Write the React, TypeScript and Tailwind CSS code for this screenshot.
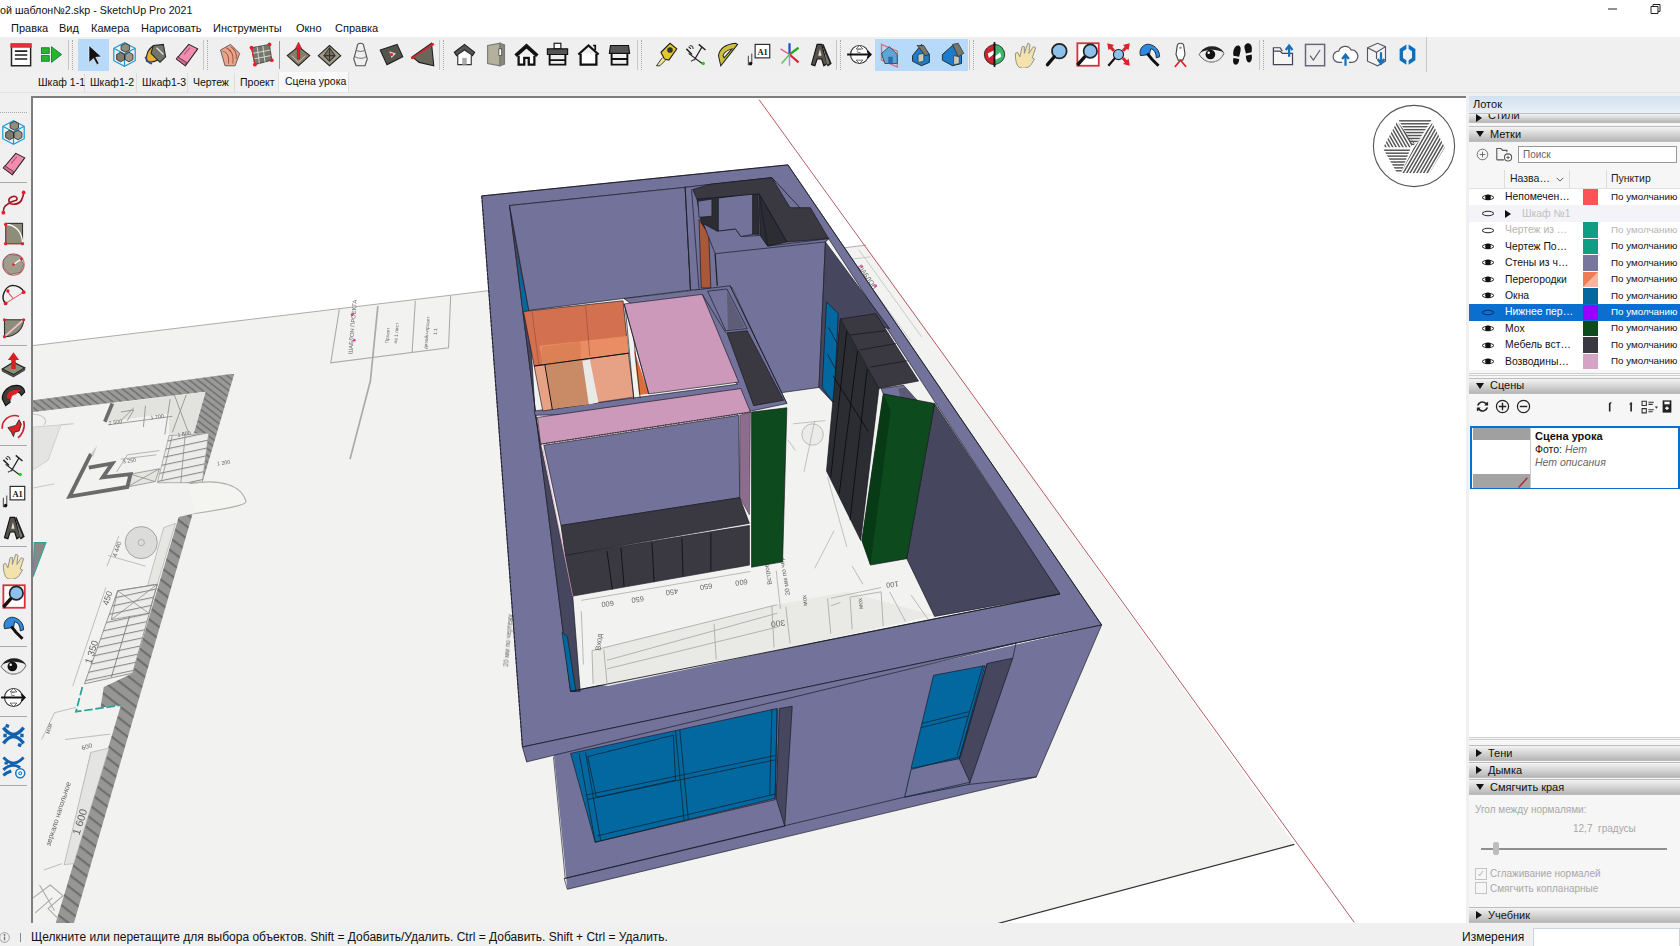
import React from "react";

type PP = { p: string; f?: string; s?: string; w?: number };
const P = ({ p, f = "none", s = "#15151f", w = 0.6 }: PP) => <polygon points={p} fill={f} stroke={s} strokeWidth={w} strokeLinejoin="round" />;
const L = ({ d, s = "#15151f", w = 0.6, dash }: { d: string; s?: string; w?: number; dash?: string }) => <path d={d} fill="none" stroke={s} strokeWidth={w} strokeDasharray={dash} />;
const T = ({ x, y, r, t, z = 6 }: { x: number; y: number; r: number; t: string; z?: number }) => (
  <text x={x} y={y} transform={`rotate(${r} ${x} ${y})`} fontSize={z} fill="#666" fontFamily="'Liberation Sans',sans-serif">{t}</text>
);

const WALL = "#72729a";
const DARK = "#3a3941";
const DARKER = "#2c2c33";
const SHADE = "#46465f";
const PINK = "#cc99bb";
const GREEN = "#0d4a1e";
const BLUE = "#02689f";
const PAPER = "#f2f3f0";

function Scene() {
  return (
    <svg viewBox="29.9 90.5 1338.4 771" preserveAspectRatio="none" className="block w-full h-full">
      <defs>
        <pattern id="hatch" patternUnits="userSpaceOnUse" width="5" height="5" patternTransform="rotate(38)">
          <rect width="5" height="5" fill="#9a9a99" />
          <rect width="5" height="1.500" fill="#727272" />
        </pattern>
        <pattern id="hatchB" patternUnits="userSpaceOnUse" width="9" height="9" patternTransform="rotate(38)">
          <rect width="9" height="9" fill="#969695" />
          <rect width="9" height="2" fill="#6e6e6e" />
        </pattern>
        <pattern id="stairs" patternUnits="userSpaceOnUse" width="7" height="7" patternTransform="rotate(-12)">
          <rect width="7" height="7" fill="#ececea" />
          <rect width="7" height="1" fill="#8a8a8a" />
        </pattern>
        <filter id="soft"><feGaussianBlur stdDeviation="0.5" /></filter>
      </defs>
      <rect x="0" y="0" width="1568" height="883" fill="#ffffff" />
      <polygon points="29,322 808,228 1208,788 931,862 29,862" fill={PAPER} />
      <L d="M29 322L808 228" s="#a9a9a6" w="0.9" />
      <L d="M1208 788L931 862" s="#333" w="1.2" />
      <L d="M708 92L1264 861" s="#b3565f" w="0.9" />

      <g filter="url(#soft)">
        {/* title block on the sheet */}
        <L d="M316 288L308 338L418 324L420 275 M387 280L384 328" s="#aaaaa8" w="1" />
        <L d="M352 285L345 355L326 428" s="#aaaaa8" w="1.6" />
        <circle cx="328" cy="293" r="1.400" fill="#f040a8" />
        <circle cx="330" cy="317" r="1.400" fill="#f040a8" />
        <T x={328} y={330} r={-85} t="ШАБЛОН ПРОЕКТА" z={5.5} />
        <T x={362} y={320} r={-85} t="Проект" z={4.500} />
        <T x={370} y={320} r={-85} t="на 1 лист" z={4.500} />
        <T x={398} y={325} r={-85} t="дизайн-проект" z={4.500} />
        <T x={407} y={312} r={-85} t="1:1" z={4.500} />
        <L d="M790 236L850 318 M801 232L860 314 M795 241L812 239" s="#c8c8c5" w="0.9" />
        <circle cx="804" cy="248" r="1.300" fill="#f040a8" />
        <circle cx="817" cy="266" r="1.300" fill="#f040a8" />
        <T x={800} y={248} r={55} t="ШАБЛОН" z={6} />
        {/* left plan */}
        <polygon points="30,373 218,348 188,450 177,451 194,404 180,404 191,365 30,384" fill="url(#hatch)" />
        <polygon points="166,482 179,479 68,862 51,862 112,658 93,660 96,641 123,628" fill="url(#hatchB)" />
        <polygon points="104,376 191,365 180,404 157,406 157,385 100,393" fill="#e2e2df" />
        <L d="M104 376L97 393" s="#6c6c6c" w="3.4" />
        <L d="M112 384L124 382L118 392 M112 392L124 380 M158 372L153 405 M135 378L133 398 M173 368L160 403 M162 368L175 403 M100 396L160 388" s="#8f8f8d" w="0.8" />
        <polygon points="157,406 194,404 188,450 146,450" fill="url(#stairs)" stroke="#999" strokeWidth="0.7" />
        <polygon points="121,442 148,437 144,449 118,454" fill="#e4e4e1" stroke="#888" strokeWidth="0.7" />
        <L d="M121 442L144 449 M148 437L118 454 M160 406L150 448 M172 405L168 450" s="#888" w="0.7" />
        <L d="M84 423L64 463L118 454L121 442L95 445L104 432L82 436" s="#6a6a6a" w="3.6" />
        <polygon points="84,423 90,415 86,426" fill="#ccc" />
        <L d="M108 440L118 424L148 420 M112 428L145 424" s="#aaa" w="0.8" />
        <T x={114} y={432} r={-8} t="3 250" z={5} />
        <T x={101} y={396} r={-8} t="2 500" z={5} />
        <T x={140} y={391} r={-8} t="1 700" z={5} />
        <T x={165} y={407} r={-8} t="1 800" z={5} />
        <T x={202} y={434} r={-8} t="1 200" z={5} />
        <polygon points="30,398 56,396 44,429 30,438" fill="#e4e4e2" stroke="#ccc" strokeWidth="0.8" />
        <L d="M30 386C40 386 44 392 40 396 M56 396L68 395 M30 455L50 451" s="#c8c8c6" w="1" />
        <polygon points="31,506 42,506 30,538" fill="#888" stroke="#2aa198" strokeWidth="1" />
        <path d="M176 451C205 446 225 452 229 468C228 472 200 476 180 479" fill="#f4f4f1" stroke="#b0b0ad" strokeWidth="1" />
        <polygon points="152,492 163,488 146,545 137,546" fill="#e6e6e3" stroke="#aaa" strokeWidth="0.6" />
        <circle cx="131" cy="506" r="15" fill="#dcdcda" stroke="#999" strokeWidth="0.8" />
        <circle cx="131" cy="506" r="3" fill="none" stroke="#999" strokeWidth="0.6" />
        <polygon points="109,551 146,545 123,628 78,638" fill="url(#stairs)" stroke="#888" strokeWidth="0.8" />
        <L d="M109 551L146 545L138 572L103 578Z M109 551L138 572 M146 545L103 578" s="#888" w="0.7" />
        <L d="M120 575L103 632" s="#777" w="0.8" />
        <L d="M98 548L67 640 M110 500L99 528 M100 518L135 528" s="#aaa" w="0.7" />
        <L d="M76 641L70 664L112 658" s="#2aa198" w="1.6" dash="8 2.5" />
        <L d="M70 660L50 665L38 690 M60 690L102 685 M84 702L60 806 M57 806L40 812" s="#aaa" w="0.7" />
        <polygon points="84,702 101,698 68,806 59,807" fill="#e4e4e2" stroke="#aaa" strokeWidth="0.6" />
        <L d="M30 838L46 826L58 836L44 848L54 858 M32 852L48 838 M36 826L50 850" s="#aaa" w="1" />
        <T x={84} y={620} r={-72} t="1 350" z={9} />
        <T x={100} y={565} r={-72} t="450" z={8} />
        <T x={108} y={520} r={-72} t="4 440" z={6} />
        <T x={73} y={780} r={-72} t="1 600" z={10} />
        <T x={46} y={790} r={-72} t="зеркало напольное" z={7} />
        <T x={45} y={685} r={-72} t="мох" z={6} />
        <T x={76} y={700} r={-15} t="600" z={6} />
        <T x={474} y={622} r={-85} t="20 мм по чертежу" z={6} />
      </g>

      {/* wall top */}
      <P p="449,182 735,153 1028,583 487,697" f={WALL} s="#1c1c2e" w="0.7" />
      {/* front */}
      <polygon points="516,700 1028,583 967,725 529,830" fill={WALL} />
      <polygon points="487,697 1028,583 948,600 490.7,711" fill={WALL} />
      <L d="M490.7 711L948 600 M526 820L843 744 M904 732L967 725 M526 820L529 830 M516 706L527 820 M1028 583L967 725 M529 830L967 725 M487 697L491 711" />
      {/* big window */}
      <P p="532,703 725,661 723,745 555,786" f={BLUE} />
      <P p="727,661 739,659 732,771 724,745" f={SHADE} />
      <L d="M843 744L905 730 M555 786L724 746 M732 771L526 820" />
      <L d="M546 742L723 705 M548 746L723 709 M630 682L638 766 M634 681L642 765 M540 703L555 786 M546 702L560 784 M557 780L723 741 M720 662L718 742 M725 662L723 745 M548 706L628 686L630 728L556 744Z" s="#0b2b3f" w="0.8" />
      {/* small window */}
      <P p="871,630 919,621 895,708 850,717" f={BLUE} />
      <P p="921,619 945,614 905,730 895,708" f={SHADE} />
      <L d="M860 675L904 664 M859 679L903 668 M850 718L896 706 M917 621L893 705 M850 718L844 744L904 732L905 730 M921 619L896 707" s="#0b2b3f" w="0.8" />
      <L d="M948 600L945 614" />

      {/* interior */}
      <P p="475,191 639,174 720,165 773,222 989,554 532,645" f={PAPER} />
      {/* floor drawing */}
      <g filter="url(#soft)">
        <polygon points="553,638 552,607 725,564 790,552 872,574 880,572 733,605 567,640" fill="#e9e9e6" />
        <L d="M553 638L552 607L725 564 M566 637L563 606 M566 624L725 585 M566 616L725 572 M668 615L666 582 M722 604L720 565 M737 600L733 566 M775 591L772 558 M775 565L784 562 M795 587L793 557L822 552L824 584" s="#a9a9a7" w="0.8" />
        <L d="M542 560L700 533 M542 570L544 620 M724 532L728 568 M775 558L822 548 M830 552L845 580 M850 555L866 578 M795 528L805 545" s="#999" w="0.6" />
        <circle cx="758" cy="405" r="10" fill="#ebebe8" stroke="#aaa" strokeWidth="0.7" />
        <L d="M740 395L770 392 M735 410L742 420 M760 392L750 440 M772 445L790 510 M778 495L760 530" s="#a5a5a3" w="0.6" />
        <T x={572} y={560} r={172} t="600" z={7} />
        <T x={600} y={556} r={172} t="650" z={7} />
        <T x={632} y={549} r={172} t="450" z={7} />
        <T x={664} y={544} r={172} t="650" z={7} />
        <T x={697} y={540} r={172} t="600" z={7} />
        <T x={732} y={578} r={172} t="300" z={8} />
        <T x={838} y={542} r={172} t="100" z={7} />
        <T x={560} y={607} r={-85} t="Вход" z={7} />
        <T x={720} y={545} r={-100} t="Встроенный" z={6} />
        <T x={737} y={555} r={-100} t="20 мм по чертежу" z={6} />
        <T x={753} y={565} r={-95} t="мох" z={6} />
        <T x={805} y={568} r={-95} t="мох" z={6} />
      </g>
      {/* left inner wall sliver */}
      <P p="475,191 493,289 499,387 504,414 534,556 541,645 532,645" f={SHADE} />
      <polygon points="482,240 493,289 488,290" fill={BLUE} />
      <polygon points="524,590 529,594 537,645 532,645" fill={BLUE} stroke="#111" strokeWidth="0.5" />
      {/* back left room */}
      <P p="475,191 639,174 644,270 493,289" f={WALL} />
      {/* back block / corridor */}
      <P p="639,174 664,171 720,165 773,222 770,225 764,361 728,366 683,268 644,270" f={WALL} />
      <L d="M639 173L644 270 M645 176L652 270" />
      <P p="650,185 707,180 708,218 670,216 655,212" f={DARKER} />
      <P p="651,187 664,185 664,201 652,202" f={WALL} />
      <P p="670,184 702,180 702,218 691,220 686,213 670,215" f={WALL} />
      <P p="708,180 734,224 716,229 709,219" f={DARKER} />
      <L d="M720 196L720 226" s="#111" />
      <P p="663,171 720,165 737,193 756,193 773,222 734,225 708,180 650,185 646,176" f={DARK} />
      <P p="708,180 734,225 716,229" f={DARKER} />
      <P p="652,204 661,218 663,268 654,268" f="#a9583a" />
      <P p="656,208 669,215 686,213 691,220 709,219 716,229 773,222 770,225 667,236" f={WALL} />
      <L d="M667 236L669 266" s="#222" w="1.2" />
      {/* right upper wall and window */}
      <P p="770,225 830,306 784,297 778,376 764,361" f={SHADE} />
      <P p="771,281 782,292 778,376 767,361" f={BLUE} />
      <L d="M773 305L781 320 M772 330L780 345" s="#111" />
      {/* wardrobe */}
      <P p="784,297 817,292 857,355 820,362" f={DARK} />
      <L d="M793 312L826 308 M802 326L836 320 M812 342L847 336" s="#111" />
      <P p="784,297 820,362 803,504 771,439" f={DARKER} />
      <L d="M790 308L775 445 M800 327L783 460 M809 344L793 485 M777 350L810 402" s="#000" />
      {/* pilaster on wardrobe */}
      <P p="822,362 843,359 858,376 824,367" f={WALL} />
      <polygon points="838,362 845,361 858,375 842,378" fill="#5a5a75" />
      {/* dark right wall */}
      <P p="872,376 989,554 872,575 846,521" f={SHADE} />
      {/* green panel */}
      <P p="824,367 872,376 846,521 812,527 804,504" f={GREEN} />
      <polygon points="824,367 831,383 812,527 804,504" fill="#083a16" />
      {/* partition mass */}
      <P p="582,278 681,266 734,376 701,383 499,387 498,383 688,358" f={WALL} />
      {/* orange room */}
      <P p="488,290 581,280 586,329 498,341" f="#d2704f" />
      <polygon points="503,322 585,313 586,329 506,340" fill="#ea8d65" />
      <polygon points="505,340 505,323 541,318 542,335" fill="#dc8055" />
      <L d="M496 290L503 345 M546 284L550 332" s="#9a4f33" w="0.6" />
      <P p="498,341 586,329 591,370 506,383" f="#e7a285" />
      <polygon points="508,339 548,335 549,377 515,381" fill="#c98a66" />
      <polygon points="543,336 550,335 558,375 549,377" fill="#e9e9e8" />
      <L d="M498 341L586 329 M508 340L515 382" s="#111" w="0.9" />
      <polygon points="591,325 605,367 596,368" fill="#dc6e3e" />
      <L d="M583 285L591 372 M588 287L597 371" s="#111" />
      {/* pink roof */}
      <P p="582,283 655,274 689,356 605,367" f={PINK} />
      <L d="M582 283L605 367" />
      {/* recess + dark strip */}
      <P p="660,271 678,269 697,306 677,308" f={WALL} />
      <polygon points="678,271 695,305 679,307" fill="#5d5d78" />
      <P p="678,310 697,308 731,373 703,378" f={DARK} />
      <L d="M655 274L677 310 M681 266L734 376" />
      {/* pink band */}
      <P p="501,389 691,362 700,384 504,414" f={PINK} />
      <L d="M504 414L700 384" s="#4a2a3a" w="1" dash="1.5 1" />
      {/* room wall */}
      <P p="507,415 689,387 690,464 523,490" f={WALL} />
      <polygon points="690,387 700,384 699,480 690,464" fill="#8d6d8d" stroke="#111" strokeWidth="0.4" />
      {/* bench */}
      <P p="523,490 690,464 699,488 527,518" f={DARK} />
      <P p="527,518 699,490 699,527 534,556" f={DARK} />
      <L d="M566 514L571 550 M579 511L582 547 M608 506L610 543 M636 502L637 538 M663 497L663 533" s="#000" />
      <L d="M506 418L534 556" s="#d99cc0" w="0.7" />
      {/* green panel left */}
      <P p="701,384 734,380 730,524 701,529" f={GREEN} />
      {/* opening edge */}
      <L d="M532 645L989 554" w="0.8" />
      <L d="M449 182L487 697" w="0.7" s="#10101c" dash="3 1" />
      <L d="M449 182L735 153L1028 583L487 697" w="0.7" />
    </svg>
  );
}

function Logo() {
  const sx = (id: string, rot: number, points: string) => (
    <g clipPath={`url(#${id})`}>
      <clipPath id={id}><polygon points={points} /></clipPath>
      <g transform={`rotate(${rot} 60 60)`}>
        {Array.from({ length: 50 }).map((_, i) => (
          <rect key={i} x="-60" y={-40 + i * 4.2} width="240" height="2.1" fill="#555" />
        ))}
      </g>
    </g>
  );
  return (
    <svg viewBox="0 0 120 120" className="absolute top-[6px] right-[10px] w-[84px] h-[84px] bg-white rounded-full">
      <circle cx="60" cy="60" r="58" fill="#fff" stroke="#555" strokeWidth="1.600" />
      {sx("lgA", 0, "38,23 85,23 66,53 58,60 48,40")}
      {sx("lgB", 60, "36,25 16,62 55,62 60,55")}
      {sx("lgC", 0, "16,64 55,64 41,99 36,99")}
      {sx("lgD", -60, "86,27 104,62 82,99 41,99 60,62")}
    </svg>
  );
}

const S = ({ children }: { children: React.ReactNode }) => (
  <svg viewBox="0 0 24 24" className="w-[27px] h-[27px]" fill="none">{children}</svg>
);
const red = "#e0202c";
const ICONS: Record<string, React.ReactNode> = {
  tray: <><rect x="4" y="3" width="17" height="19" fill="#fff" stroke="#222" strokeWidth="1.300" /><rect x="3" y="2" width="19" height="4" fill="#e0303a" /><path d="M7 9h11M7 12.500h11M7 16h11" stroke="#222" strokeWidth="1.400" /></>,
  go: <><rect x="3" y="6" width="7" height="5" fill="#28b52a" stroke="#164" strokeWidth=".7" /><rect x="3" y="13" width="7" height="5" fill="#28b52a" stroke="#164" strokeWidth=".7" /><path d="M12 5l9 7-9 7z" fill="#28b52a" stroke="#164" strokeWidth=".7" /></>,
  select: <path d="M8 4l0 15 4-3.500 3 5.500 2-1-3-5.500 5-.5z" fill="#111" stroke="#fff" strokeWidth=".5" />,
  comp: <><path d="M12 1.500l9.500 5v11l-9.500 5-9.500-5v-11z M2.500 6.500l9.500 5 9.500-5 M12 11.500v11" stroke="#1a9bd8" strokeWidth="1.100" /><path d="M9 4l4-2 3.500 2v4l-3.500 2-4-2z" fill="#8f8d7d" stroke="#222" strokeWidth=".7" /><path d="M5 12l3.500-2 3.500 2v4.500l-3.500 2-3.500-2z" fill="#7f7d70" stroke="#222" strokeWidth=".7" /><path d="M12.500 12l3.500-2 3.500 2v4.500l-3.500 2-3.500-2z" fill="#9a9889" stroke="#222" strokeWidth=".7" /></>,
  paint: <><path d="M4 18C3 12 6 6 11 4l8 8c-3 5-9 8-15 6z" fill="#e8b12f" stroke="#222" /><path d="M10 4l9-1 2 11-5 5-8-8z" fill="#73736a" stroke="#222" strokeWidth=".9" /><path d="M13 6l6 6" stroke="#ddd" strokeWidth="1.200" /><path d="M3 14c1 4 4 6 6 6" stroke="#3a4a9a" strokeWidth="1.600" /></>,
  eraser: <><path d="M3 16L14 3l8 4-11 15z" fill="#f08cb0" stroke="#222" strokeWidth=".9" /><path d="M3 16l8 6 1-3-8-5z" fill="#d66a90" stroke="#222" strokeWidth=".6" /><path d="M10 12l5-6" stroke="#b15477" strokeWidth="1" /></>,
  cont1: <><path d="M4 8L13 3l8 8-4 11-9 0z" fill="#e8a68f" stroke="#555" strokeWidth=".8" /><path d="M6 9c4 1 6 4 5 11M9 6c4 2 7 5 6 14M13 5c3 2 6 5 5 11" stroke="#a5533f" strokeWidth=".9" /></>,
  cont2: <><path d="M4 6L20 3l2 14-15 4z" fill="#77766a" stroke="#333" strokeWidth=".7" /><path d="M9 5l2 15M14 4l2 15M5 11l16-3M6 16l15-3" stroke="#ddd" strokeWidth=".8" /><g fill={red}><circle cx="4" cy="6" r="1.700" /><circle cx="20" cy="3" r="1.700" /><circle cx="22" cy="17" r="1.700" /><circle cx="7" cy="21" r="1.700" /></g><path d="M4 6l3 15" stroke={red} /></>,
  sand1: <><path d="M12 5L22 13 12 22 2 13z" fill="#857f69" stroke="#222" strokeWidth=".9" /><path d="M12 1l3 6h-2v9h-2V7H9z" fill={red} stroke="#611" strokeWidth=".4" /><path d="M6 13l6 6 6-6" stroke="#ccc" strokeWidth=".7" /></>,
  sand2: <><path d="M12 4L22 13 12 22 2 13z" fill="#a19c87" stroke="#222" strokeWidth=".9" /><path d="M12 6l5 7-5 5-5-5z M12 6v12M7 13h10" stroke="#333" strokeWidth=".9" fill="#777161" /></>,
  sand3: <><path d="M12 2a3 3 0 013 3l3 11-2 6H8l-2-6L9 5a3 3 0 013-3z" fill="#f0f0f0" stroke="#555" /><path d="M8 8c3 2 5 2 8 0M7 14c4 2 7 2 10 0" stroke="#888" /></>,
  sand4: <><path d="M2 8L17 3l5 11-14 7z" fill="#55544c" stroke="#222" /><path d="M10 9l6 2-4 4z" fill="#d9d8c8" /><circle cx="12" cy="12" r="1.400" fill={red} /></>,
  sand5: <><path d="M3 14L20 2l2 20-13-3z" fill="#69675b" stroke="#222" /><path d="M3 15L21 3" stroke={red} strokeWidth="1.400" /><circle cx="3" cy="15" r="1.300" fill={red} /><circle cx="21" cy="3" r="1.300" fill={red} /></>,
  h1: <><path d="M3 10L12 3l9 7-2 3-7-5-7 5z" fill="#555" stroke="#222" /><path d="M6 12l6-4 6 4v9H6z" fill="#fff" stroke="#333" /><path d="M10 15h4v6h-4z" fill="#aaa" /></>,
  h2: <><path d="M5 4l11-2v20L5 20z" fill="#b3b09c" stroke="#777" /><path d="M16 2l4 1.500v17L16 22z" fill="#8a8775" stroke="#777" /><rect x="15" y="7" width="2.500" height="6" fill="#fff" stroke="#333" strokeWidth=".6" /></>,
  h3: <><path d="M2 12L12 3l10 9-1.500 1.500L12 6 3.500 13.500z" fill="#111" stroke="#111" /><path d="M5 13v8h5v-6h4v6h5v-8" stroke="#111" strokeWidth="2" fill="#fff" /></>,
  h4: <><rect x="9" y="2" width="6" height="5" fill="#fff" stroke="#111" /><path d="M3 7h18v5H3z" fill="#555" stroke="#111" /><path d="M5 12v9h14v-9M5 17h14" stroke="#111" strokeWidth="1.700" /></>,
  h5: <><path d="M3 12L12 4l9 8" stroke="#111" strokeWidth="2" /><path d="M5 11v10h14V11" stroke="#111" strokeWidth="2" fill="#fff" /><path d="M16 4h2v4" stroke="#111" strokeWidth="1.500" /></>,
  h6: <><path d="M4 4h16l1 7H3z" fill="#555" stroke="#111" /><path d="M5 11v10h14V11M5 16h14" stroke="#111" strokeWidth="1.700" /></>,
  tape: <><path d="M8 10L16 2l6 5-7 10-4-1z" fill="#e4c72a" stroke="#222" /><circle cx="16" cy="8" r="2.500" fill="#333" /><path d="M9 15l-5 7 3 0 5-5" fill="#eee8a0" stroke="#222" strokeWidth=".8" /></>,
  dim: <><path d="M7 7L5 5M17 5l-7 12M5 11l12 9" stroke="#222" /><path d="M3 7l5 5M14 3l6 5" stroke="#222" strokeWidth="1.300" /><path d="M7 18l4-2M6 4a3 3 0 013 3" stroke="#444" /><circle cx="18" cy="20" r="1.500" fill="#2c2" /></>,
  prot: <path d="M6 22L4 13C5 7 10 3 19 2l2 1-15 19z M9 15l7-8c-4 1-7 3-8 6z" fill="#c9c040" stroke="#222" strokeWidth=".9" fillRule="evenodd" />,
  text: <><rect x="9" y="3" width="13" height="12" fill="#fff" stroke="#222" /><text x="11" y="12.500" fontSize="7.500" fontWeight="bold" fontFamily="'Liberation Serif',serif" fill="#111">A1</text><path d="M6 11v9M3 13v8h3" stroke="#555" /><circle cx="5" cy="20" r="1.500" fill="#111" /></>,
  axes: <><path d="M12 2v10" stroke="#1c4fd0" strokeWidth="2" /><path d="M12 12l8-6" stroke="#2a2" strokeWidth="2" /><path d="M12 12l8 7" stroke={red} strokeWidth="2" /><path d="M12 12L4 7" stroke="#e58" strokeWidth="1.300" /><path d="M12 12l-7 8" stroke="#6b6" strokeWidth="1.300" /><path d="M12 12v10" stroke="#99c" strokeWidth="1.300" /></>,
  a3d: <><path d="M4 21L9 3h4l5 17-3 2-2-6H9l-2 6z" fill="#55534a" stroke="#111" /><path d="M10 13h3l-1.500-6z" fill="#ddd" /><path d="M14 3l7 17-3 2" stroke="#222" strokeWidth="1.600" fill="#7c7a6e" /></>,
  orbitp: <><circle cx="12" cy="12" r="8" fill="#fff" stroke="#333" /><path d="M1 12h21m-3-3l3 3-3 3" stroke="#111" strokeWidth="1.600" /><path d="M12 4l-3 3h6zM12 20l-3-3h6z" fill="#fff" stroke="#333" strokeWidth=".6" /><text x="9.500" y="10.500" fontSize="5" fill="#333">C</text></>,
  viewA: <><path d="M4 3l14 6v14L4 17z" fill="none" stroke="#e06a86" strokeWidth="1.200" /><path d="M4 11l7-6 7 7v8H7z" fill="#5da4d8" stroke="#444" strokeWidth=".8" /><path d="M10 14h4v6h-4z" fill="#2a6ea8" /></>,
  viewB: <><path d="M4 13l8-10 7 9v7l-7 3-8-4z" fill="#1d7cc9" stroke="#222" strokeWidth=".8" /><path d="M8 4h6l5 8-4 1-5-7z" fill="#77776c" stroke="#222" strokeWidth=".6" /><path d="M9 12l5-1 0 7-5 1z" fill="#c9c9bb" stroke="#222" strokeWidth=".5" /></>,
  viewC: <><path d="M3 12l9-8 8 9v7l-8 2-9-5z" fill="#1d7cc9" stroke="#222" strokeWidth=".8" /><path d="M12 3l5-1 5 9-5 3z" fill="#77776c" stroke="#222" strokeWidth=".6" /><path d="M13 13l5 1v6l-5 1z" fill="#c9c9bb" stroke="#222" strokeWidth=".5" /></>,
  orbit: <><path d="M12 3A9 9 0 0121 12c0 5-4 8-9 9" fill="#3fb56c" stroke="#111" strokeWidth=".7" /><path d="M12 21a9 9 0 01-9-9c0-5 4-8 9-9" fill="#cc2530" stroke="#111" strokeWidth=".7" /><path d="M6 11l6-3v3l-5 4zM18 14l-6 3v-3l5-4z" fill="#fff" /><path d="M12 1v22" stroke="#111" strokeWidth="1.600" /></>,
  hand: <path d="M5 22c-2-4-2-8-2-11l2-1 2 4 2-9 2 0 0 6 3-9 2 1-1 8 4-6 2 1-3 9 2 1-3 5c-2 3-9 5-12 1z" fill="#f4e2ac" stroke="#888" strokeWidth=".8" />,
  zoom: <><circle cx="14.500" cy="9" r="6.500" fill="#8cc1ec" stroke="#222" strokeWidth="1.600" /><path d="M10 14l-6 7" stroke="#111" strokeWidth="3" strokeLinecap="round" /></>,
  zoomw: <><rect x="3" y="2" width="19" height="20" fill="#fff" stroke="#d8303c" strokeWidth="1.600" /><circle cx="14.500" cy="9" r="6" fill="#8cc1ec" stroke="#222" strokeWidth="1.500" /><path d="M10 13.500l-7 8" stroke="#111" strokeWidth="3" /></>,
  zoomx: <><circle cx="12" cy="12" r="4.500" fill="#8cc1ec" stroke="#222" /><path d="M9 15l-6 7" stroke="#111" strokeWidth="2" /><path d="M2 2l6 1.500-1.500 1.500 2.500 3-2 1.500-2.500-2.500L3 8zM22 2l-6 1.500 1.500 1.500-2.500 3 2 1.500 2.500-2.500L21 8zM22 22l-6-1.500 1.500-1.500-2.500-3 2-1.500 2.500 2.500 1.500-1.500z" fill={red} /></>,
  zoomp: <><path d="M4 13C2 7 7 2 12 3c5 1 9 5 9 11l-3 1c0-4-2-8-5-8l-1 5-8 1z" fill="#2e8ae0" stroke="#222" strokeWidth=".8" /><path d="M10 11l4 5 6 6" stroke="#111" strokeWidth="2.600" /></>,
  pos: <><path d="M12 2c2 0 3 1 3 3l1 7-2 5h-4l-2-5 1-7c0-2 1-3 3-3z" fill="#fff" stroke="#444" /><path d="M7 23l5-6 5 6" stroke={red} strokeWidth="1.400" /><circle cx="12" cy="6" r="1.200" fill="#999" /></>,
  eye: <><path d="M1 12C5 5 18 3 23 11c-3 8-15 12-22 1z" fill="#eee" stroke="#333" strokeWidth=".7" /><path d="M2 10C7 3 18 3 23 10c-7-3-14-3-21 0z" fill="#222" /><circle cx="11" cy="12" r="4.300" fill="#111" /><circle cx="9.500" cy="10.500" r="1.100" fill="#fff" /><path d="M4 15c5 5 12 5 17 0" stroke="#aaa" strokeWidth=".8" /></>,
  feet: <><path d="M8 4c2 0 3 2 2 6l-1 4-5-1C3 9 5 4 8 4zM4 15l5 1c0 3-1 5-3 5-2 0-3-3-2-6z" fill="#111" /><path d="M17 2c3 0 4 4 3 8l-5 1-1-4c-1-3 1-5 3-5zM15 13l5-1c1 3 0 7-2 7-2 0-3-3-3-6z" fill="#111" /></>,
  cl1: <><path d="M3 9h6l2 2h9v10H3z M3 9V6h6l2 3" fill="#f5f5f5" stroke="#445" strokeWidth="1.100" /><path d="M17 14V5m-3 3l3-4 3 4" stroke="#1970b8" strokeWidth="2" /></>,
  cl2: <><rect x="4" y="3" width="17" height="19" fill="#eee" stroke="#667" strokeWidth="1.300" /><path d="M8 13l3 4 6-9" stroke="#556" /></>,
  cl3: <><path d="M6 19a5 5 0 010-10 6 6 0 0111-1 5.500 5.500 0 011 11h-3M9 19H6" fill="#fff" stroke="#556" strokeWidth="1.100" /><path d="M12 22v-9m-3 3l3-4 3 4" stroke="#1970b8" strokeWidth="2" /></>,
  cl4: <><path d="M4 6l9-4 7 3v13l-7 4-9-4z M4 6l8 4 8-5 M12 10v6" fill="#f3f3f3" stroke="#556" /><path d="M16 10v9m-3-3l3 4 3-4" stroke="#1970b8" strokeWidth="2" /></>,
  cl5: <><path d="M11 3L5 7v10l6 4v-4l-3-2V9l3-2zM13 3v4l3 2v6l-3 2v4l6-4V7z" fill="#0f6fb8" /></>,
  free: <><path d="M3 20c0-5 3-6 6-8s7-1 6-4-8-1-7 3 9 3 11-1 2-6 2-7" stroke="#a81820" strokeWidth="1.500" /><g fill={red}><circle cx="21" cy="3" r="1.700" /><circle cx="3" cy="21" r="1.700" /></g></>,
  rect: <><rect x="5" y="3" width="15" height="18" fill="#8e8c7b" stroke="#333" /><path d="M5 4c9 0 15 7 15 17" stroke="#fff" strokeWidth="1.200" /><g fill={red}><circle cx="5" cy="4" r="1.500" /><circle cx="5" cy="21" r="1.500" /><circle cx="20" cy="21" r="1.500" /></g><path d="M5 4v17h15" stroke={red} /></>,
  circ: <><circle cx="12" cy="12" r="9.500" stroke="#d8606c" /><path d="M8 3l9 1 4 8-3 7-9 2-6-6V8z" fill="#a09d8c" stroke="#555" strokeWidth=".6" /><path d="M12 12l7-5" stroke="#fff" strokeWidth="1.100" /><circle cx="12" cy="12" r="1.200" fill={red} /><circle cx="19" cy="7" r="1.200" fill={red} /></>,
  arc: <><path d="M5 19C0 14 4 4 11 3c4 0 9 2 10 6" stroke="#222" strokeWidth="1.300" /><path d="M5 19L21 9M7 9l5 6" stroke="#d8606c" strokeWidth="1" /><g fill={red}><circle cx="5" cy="19" r="1.700" /><circle cx="21" cy="9" r="1.700" /><circle cx="7" cy="8" r="1.500" /></g></>,
  pie: <><path d="M4 6h17c0 8-7 15-17 15z" fill="#8e8c7b" stroke="#333" /><path d="M4 21L21 6" stroke="#f0c0c8" strokeWidth="1.500" /><g fill={red}><circle cx="4" cy="6" r="1.400" /><circle cx="21" cy="6" r="1.400" /><circle cx="4" cy="21" r="1.400" /></g></>,
  push: <><path d="M2 16l10-6 10 5-10 6z" fill="#8e8c7b" stroke="#222" /><path d="M2 16v2l10 5 10-6v-2l-10 6z" fill="#55534a" stroke="#222" strokeWidth=".6" /><path d="M12 1l5 7h-3v8h-4V8H7z" fill="#d91f22" /></>,
  follow: <><path d="M2 15C2 7 9 3 15 3c4 0 7 3 7 6l-3 3c-1-3-4-4-7-3-3 1-4 4-3 9l-4 3z" fill="#3d3d38" stroke="#111" /><path d="M6 14c0-5 4-7 8-7h4l-4 4c-3 0-4 2-4 5z" fill="#d92126" /></>,
  rot: <><path d="M2 14A11 11 0 0117 3" stroke="#c8202c" strokeWidth="1.400" /><path d="M21 7c2 7-2 13-5 15" stroke="#c8202c" strokeWidth="1.400" /><path d="M7 13l7-2 3-5 2 4-2 6-4 1-1 4-2-4z" fill="#d92126" stroke="#222" strokeWidth=".7" /></>,
  logoX: <path d="M3 5c3 4 6 6 9 6s6-2 9-6M3 19c3-4 6-6 9-6s6 2 9 6M3 12h3M18 12h3M5 3l3 1M19 21l-3-1" stroke="#0f62ad" strokeWidth="3" />,
  logoXg: <><path d="M3 4c3 3 6 5 9 5s6-2 9-5M3 15c3-3 6-4 9-4s4 1 6 2M4 9h3M3 20c2-2 4-3 7-4" stroke="#0f62ad" strokeWidth="2.600" /><circle cx="18" cy="18" r="4" fill="#fff" stroke="#1a7ac0" strokeWidth="1.400" /><circle cx="18" cy="18" r="1.300" stroke="#1a7ac0" /></>,
};

const Btn = ({ n, on, w = "w-[31px]" }: { n: string; on?: boolean; w?: string }) => (
  <div className={`${w} h-[32px] flex items-center justify-center shrink-0 ${on ? "bg-[#b8dafa]" : ""}`}>
    <S>{ICONS[n]}</S>
  </div>
);
const Grip = ({ cls = "" }: { cls?: string }) => (
  <div className={`flex shrink-0 h-full items-center ${cls}`}>
    <div className="w-px h-[30px] bg-[#c8c8c8]" />
    <div className="w-px h-[30px] ml-[3px] border-l border-dotted border-[#aaa]" />
  </div>
);

function TopBar() {
  return (
    <div className="h-[35px] flex items-center bg-[#efefef] pl-[5px] shrink-0 w-[1427px] border-r border-[#c9c9c9]">
      <Btn n="tray" /><Btn n="go" />
      <Grip cls="ml-[1px] w-[10px]" />
      <Btn n="select" on /><Btn n="comp" /><Btn n="paint" /><Btn n="eraser" />
      <Grip cls="ml-[1px] w-[11px]" />
      <Btn n="cont1" /><Btn n="cont2" />
      <div className="w-px h-[28px] bg-[#999] mx-[3px] shrink-0" />
      <Btn n="sand1" /><Btn n="sand2" /><Btn n="sand3" /><Btn n="sand4" /><Btn n="sand5" />
      <Grip cls="ml-[1px] w-[10px]" />
      <Btn n="h1" /><Btn n="h2" /><Btn n="h3" /><Btn n="h4" /><Btn n="h5" /><Btn n="h6" />
      <Grip cls="ml-[2px] w-[13px]" />
      <Btn n="tape" /><Btn n="dim" /><Btn n="prot" /><Btn n="text" /><Btn n="axes" /><Btn n="a3d" />
      <Grip cls="w-[8px]" />
      <Btn n="orbitp" />
      <Btn n="viewA" on /><Btn n="viewB" on /><Btn n="viewC" on />
      <Grip cls="ml-[1px] w-[10px]" />
      <Btn n="orbit" /><Btn n="hand" /><Btn n="zoom" /><Btn n="zoomw" /><Btn n="zoomx" /><Btn n="zoomp" /><Btn n="pos" /><Btn n="eye" /><Btn n="feet" />
      <Grip cls="ml-[1px] w-[9px]" />
      <Btn n="cl1" /><Btn n="cl2" /><Btn n="cl3" /><Btn n="cl4" /><Btn n="cl5" />
    </div>
  );
}

const LSep = () => <div className="h-[7.500px] flex items-center shrink-0"><div className="h-px w-[27px] bg-[#a8a8a8]" /></div>;
function LeftBar() {
  const L2 = (n: string) => <div key={n} className="w-[27px] h-[31px] flex items-center justify-center"><S>{ICONS[n]}</S></div>;
  return (
    <div className="w-[31px] shrink-0 bg-[#f0f0f0] flex flex-col pt-[20px] relative">
      <div className="h-px w-[27px] border-t border-dotted border-[#aaa] mb-[4px] -mt-[4px]" />
      {["comp", "eraser"].map(L2)}<LSep />
      {["free", "rect", "circ", "arc", "pie"].map(L2)}<LSep />
      {["push", "follow", "rot"].map(L2)}<LSep />
      {["dim", "text", "a3d"].map(L2)}<LSep />
      {["hand", "zoomw", "zoomp"].map(L2)}<LSep />
      {["eye", "orbitp"].map(L2)}<LSep />
      {["logoX", "logoXg"].map(L2)}<LSep />
    </div>
  );
}

const Head = ({ t, open, clip }: { t: string; open?: boolean; clip?: boolean }) => (
  <div className={`flex items-center bg-linear-to-b from-[#f4f4f4] to-[#b6b6b6] border-t border-b border-[#bdbdbd] pl-[7px] shrink-0 text-[11px] text-[#111] leading-none ${clip ? "h-[10px] overflow-hidden" : "h-[16px]"}`}>
    <span className={`w-0 h-0 mr-[6px] ${open ? "border-l-[4px] border-r-[4px] border-t-[6px] border-l-transparent border-r-transparent border-t-[#111]" : "border-t-[4px] border-b-[4px] border-l-[6px] border-t-transparent border-b-transparent border-l-[#111]"}`} />
    <span className={clip ? "-mt-[5px]" : ""}>{t}</span>
  </div>
);

const Eye = ({ on, hi }: { on: boolean; hi?: boolean }) => (
  <svg viewBox="0 0 14 9" className="w-[14px] h-[9px]">
    <path d="M1 4.500C3 1.500 11 1.500 13 4.500C11 7.500 3 7.500 1 4.500Z" fill={on ? "#fff" : "none"} stroke={hi ? "#062a55" : "#222"} strokeWidth="1" />
    {on && <circle cx="7" cy="4.200" r="2.800" fill="#111" />}
  </svg>
);

type Row = { name: string; c?: string; vis: boolean; dim?: boolean; sel?: boolean; grp?: boolean; split?: boolean };
const ROWS: Row[] = [
  { name: "Непомечен…", c: "#ff5256", vis: true },
  { name: "Шкаф №1", vis: false, grp: true },
  { name: "Чертеж из …", c: "#0f9d84", vis: false, dim: true },
  { name: "Чертеж По…", c: "#0f9d84", vis: true },
  { name: "Стены из ч…", c: "#77779d", vis: true },
  { name: "Перегородки", c: "#ee7d52", vis: true, split: true },
  { name: "Окна", c: "#02689f", vis: true },
  { name: "Нижнее пер…", c: "#9900ff", vis: false, sel: true },
  { name: "Мох", c: "#0d4a1e", vis: true },
  { name: "Мебель вст…", c: "#3a3941", vis: true },
  { name: "Возводины…", c: "#d5a3c6", vis: true },
];

function TagRow({ r }: { r: Row }) {
  const txt = r.sel ? "text-white" : r.dim ? "text-[#b5b5b5]" : "text-[#111]";
  return (
    <div className={`h-[16.450px] flex items-center text-[10.400px] whitespace-nowrap ${r.sel ? "bg-[#0b6fd0]" : r.grp ? "bg-[#f4f4f8]" : "bg-white"}`}>
      <div className="w-[36px] pl-[12px] flex shrink-0"><Eye on={r.vis} hi={r.sel} /></div>
      {r.grp ? (
        <div className="flex items-center">
          <span className="w-0 h-0 border-t-[4px] border-b-[4px] border-l-[6px] border-t-transparent border-b-transparent border-l-[#111] mr-[11px]" />
          <span className="text-[#c0c0c0]">{r.name}</span>
        </div>
      ) : (
        <>
          <div className={`w-[78px] shrink-0 ${txt}`}>{r.name}</div>
          <div className="w-[15px] h-[15.500px] shrink-0 relative overflow-hidden" style={{ backgroundColor: r.c }}>
            {r.split && <div className="absolute inset-0 bg-[#f5b5a0] [clip-path:polygon(100%_0,100%_100%,0_100%)]" />}
          </div>
          <div className={`ml-[13px] text-[9.800px] ${txt}`}>По умолчанию</div>
        </>
      )}
    </div>
  );
}

function SmallGlyph({ children, cls = "w-[17px] h-[17px]" }: { children: React.ReactNode; cls?: string }) {
  return <svg viewBox="0 0 16 16" fill="none" className={cls}>{children}</svg>;
}

function Tray() {
  return (
    <div className="w-[211px] shrink-0 ml-[3px] bg-[#f6f6f6] flex flex-col overflow-hidden h-full">
      <div className="h-[17px] bg-linear-to-b from-[#d3e1ef] to-[#e9eff6] pl-[4px] flex items-center text-[11px] text-[#111] shrink-0">Лоток</div>
      <Head t="Стили" clip />
      <div className="h-[3px] shrink-0" />
      <Head t="Метки" open />
      <div className="h-[21px] flex items-center pl-[7px] pt-[3px] shrink-0">
        <SmallGlyph cls="w-[13px] h-[13px]"><circle cx="8" cy="8" r="6.500" stroke="#555" /><path d="M8 4.500v7M4.500 8h7" stroke="#555" /></SmallGlyph>
        <SmallGlyph cls="w-[19px] h-[19px] ml-[6px]"><path d="M1.500 12.500V3h3.500l1.500 1.500h3.500V6M1.500 12.500h6" stroke="#555" strokeWidth=".9" /><circle cx="11" cy="10.500" r="3" fill="#fff" stroke="#555" strokeWidth=".9" /><path d="M11 9v3M9.500 10.500h3" stroke="#555" strokeWidth=".8" /></SmallGlyph>
        <div className="ml-[4px] w-[159px] h-[17px] bg-white border border-[#999] text-[10px] text-[#666] pl-[4px] leading-[15px]">Поиск</div>
      </div>
      <div className="h-[19px] mt-[7px] flex items-center text-[10.500px] text-[#222] border-b border-[#e0e0e0] shrink-0">
        <div className="w-[36px] h-full border-r border-[#dcdcdc]" />
        <div className="w-[65px] h-full border-r border-[#dcdcdc] flex items-center pl-[5px]">Назва…<svg viewBox="0 0 10 6" className="w-[8px] h-[5px] ml-[6px]"><path d="M1 1l4 4 4-4" stroke="#333" fill="none" /></svg></div>
        <div className="w-[37px] h-full border-r border-[#dcdcdc]" />
        <div className="pl-[4px]">Пунктир</div>
      </div>
      <div className="shrink-0">{ROWS.map((r) => <TagRow key={r.name} r={r} />)}</div>
      <div className="h-[3px] mt-[3px] border-t border-b border-[#d0d0d0] shrink-0" />
      <div className="h-[2px] shrink-0" />
      <Head t="Сцены" open />
      <div className="h-[25px] flex items-center pl-[6px] text-[#222] shrink-0">
        <SmallGlyph cls="w-[15px] h-[15px]"><path d="M2 7a6 6 0 0110-3l2-1v4h-4l1-1.500a4 4 0 00-7 1.500zM14 9a6 6 0 01-10 3l-2 1V9h4l-1 1.500a4 4 0 007-1.500z" fill="#222" /></SmallGlyph>
        <SmallGlyph cls="w-[15px] h-[15px] ml-[5px]"><circle cx="8" cy="8" r="6.500" stroke="#222" strokeWidth="1.300" /><path d="M8 4v8M4 8h8" stroke="#222" strokeWidth="1.500" /></SmallGlyph>
        <SmallGlyph cls="w-[15px] h-[15px] ml-[6px]"><circle cx="8" cy="8" r="6.500" stroke="#222" strokeWidth="1.300" /><path d="M4 8h8" stroke="#222" strokeWidth="1.500" /></SmallGlyph>
        <SmallGlyph cls="w-[13px] h-[13px] ml-[73px]"><path d="M6 14V4l3-2v2L8 5v9z" fill="#222" /></SmallGlyph>
        <SmallGlyph cls="w-[13px] h-[13px] ml-[6px]"><path d="M9 14V5L7 6l3-4 2 4-1-1v9z" fill="#222" /></SmallGlyph>
        <SmallGlyph cls="w-[17px] h-[17px] ml-[5px]"><path d="M1 3h4v4H1zM1 10h4v4H1zM7 4h5M7 6h4M7 11h5M7 13h4" stroke="#333" /><path d="M13 8l3 0-1.500 2z" fill="#333" /></SmallGlyph>
        <SmallGlyph cls="w-[14px] h-[15px] ml-[2px]"><rect x="3" y="1" width="10" height="14" fill="#222" /><rect x="5" y="2.500" width="6" height="3" fill="#fff" /><path d="M6 10h4M8 8v4" stroke="#fff" strokeWidth="1.500" /></SmallGlyph>
      </div>
      <div className="h-[7px] shrink-0" />
      <div className="h-[64px] ml-[1px] border-2 border-[#0b6fd0] bg-white flex shrink-0 text-[#111]">
        <div className="w-[58px] h-full flex flex-col ml-[1px] border-r border-[#ccc] relative shrink-0">
          <div className="h-[12px] bg-[#a0a0a0]" />
          <div className="flex-1 bg-white" />
          <div className="h-[14px] bg-[#a4a4a4]" />
          <svg viewBox="0 0 12 12" className="absolute right-[1px] bottom-0 w-[13px] h-[13px]"><path d="M2 11l8-9 1 1-8 9z" fill="#b2303a" /></svg>
        </div>
        <div className="pl-[4px] pt-[2px] text-[10.500px] leading-[13px]">
          <div className="font-bold text-[11px]">Сцена урока</div>
          <div>Фото: <i className="text-[#666]">Нет</i></div>
          <div className="italic text-[#666]">Нет описания</div>
        </div>
      </div>
      <div className="flex-1 bg-white -mt-px" />
      <div className="h-[3px] border-t border-b border-[#cfcfcf] shrink-0" />
      <div className="h-[5px] shrink-0" />
      <Head t="Тени" />
      <div className="h-px shrink-0" />
      <Head t="Дымка" />
      <div className="h-px shrink-0" />
      <Head t="Смягчить края" open />
      <div className="h-[112px] shrink-0 text-[10px] text-[#a8a8a8] pl-[6px] relative">
        <div className="pt-[7px]">Угол между нормалями:</div>
        <div className="pl-[98px] pt-[4px]">12,7&nbsp; градусы</div>
        <div className="relative h-[20px] mt-[3px] ml-[6px] w-[186px] flex items-center">
          <div className="h-[2px] w-full bg-[#8f8f8f]" />
          <div className="absolute left-[12px] top-[3px] w-[6px] h-[13px] bg-[#bdbdbd] rounded-[2px]" />
        </div>
        <div className="flex items-center mt-[7px] h-[15px]"><span className="w-[12px] h-[12px] border border-[#c4c4c4] mr-[3px] flex items-center justify-center text-[10px] text-[#bbb] leading-none">✓</span>Сглаживание нормалей</div>
        <div className="flex items-center h-[14px]"><span className="w-[12px] h-[12px] border border-[#c4c4c4] mr-[3px]" />Смягчить копланарные</div>
      </div>
      <Head t="Учебник" />
    </div>
  );
}

export default function App() {
  return (
    <div className="w-[1680px] h-[946px] flex flex-col overflow-hidden bg-[#f0f0f0] font-['Liberation_Sans',sans-serif] text-[#111]">
      <div className="h-[20px] bg-white flex items-center text-[10.700px] whitespace-nowrap shrink-0 relative">
        <span>ой шаблон№2.skp - SketchUp Pro 2021</span>
        <svg viewBox="0 0 60 12" className="absolute right-[12px] top-[3px] w-[60px] h-[12px]">
          <path d="M0 6h9" stroke="#222" />
          <path d="M43 3.500h7v7h-7zM45 3.500v-2h7v7h-2" fill="none" stroke="#222" />
        </svg>
      </div>
      <div className="h-[17px] bg-white flex items-center text-[11px] shrink-0 whitespace-nowrap pl-[11px]">
        <span className="w-[48px]">Правка</span>
        <span className="w-[32px]">Вид</span>
        <span className="w-[50px]">Камера</span>
        <span className="w-[72px]">Нарисовать</span>
        <span className="w-[83px]">Инструменты</span>
        <span className="w-[39px]">Окно</span>
        <span>Справка</span>
      </div>
      <TopBar />
      <div className="h-[20px] flex items-end text-[10.500px] shrink-0 pl-[33px] whitespace-nowrap">
        <div className="h-[19px] px-[5px] flex items-center w-[52px] border-r border-[#ddd]">Шкаф 1-1</div>
        <div className="h-[19px] px-[5px] flex items-center w-[52px] border-r border-[#ddd]">Шкаф1-2</div>
        <div className="h-[19px] px-[5px] flex items-center w-[51px] border-r border-[#ddd]">Шкаф1-3</div>
        <div className="h-[19px] px-[5px] flex items-center w-[47px] border-r border-[#ddd]">Чертеж</div>
        <div className="h-[19px] px-[5px] flex items-center w-[43px]">Проект</div>
        <div className="h-[20px] px-[6px] flex items-center w-[71px] bg-[#f9f9f9] border-x border-[#dedede]">Сцена урока</div>
      </div>
      <div className="h-[4px] shrink-0 border-t border-[#e4e4e4]" />
      <div className="flex flex-1 min-h-0">
        <LeftBar />
        <div className="w-[1435px] shrink-0 relative border-t-2 border-l-2 border-[#7d7d7d] bg-white">
          <Scene />
          <Logo />
        </div>
        <Tray />
      </div>
      <div className="h-[23px] w-[1680px] shrink-0 flex items-center text-[12px] bg-[#f0f0f0] whitespace-nowrap pt-[5px]">
        <svg viewBox="0 0 12 12" className="w-[11px] h-[11px] shrink-0 -ml-[1px]"><circle cx="6" cy="6" r="5.300" fill="none" stroke="#999" /><circle cx="6" cy="3.300" r="1" fill="#777" /><path d="M6 5v4" stroke="#777" strokeWidth="1.500" /></svg>
        <div className="w-px h-[9px] bg-[#888] ml-[10px] mr-[10px] shrink-0" />
        <span className="flex-1 min-w-0">Щелкните или перетащите для выбора объектов. Shift = Добавить/Удалить. Ctrl = Добавить. Shift + Ctrl = Удалить.</span>
        <span className="w-[71px] shrink-0">Измерения</span>
        <div className="w-[147px] h-[19px] shrink-0 bg-white border border-[#c9d3e0]" />
      </div>
    </div>
  );
}
